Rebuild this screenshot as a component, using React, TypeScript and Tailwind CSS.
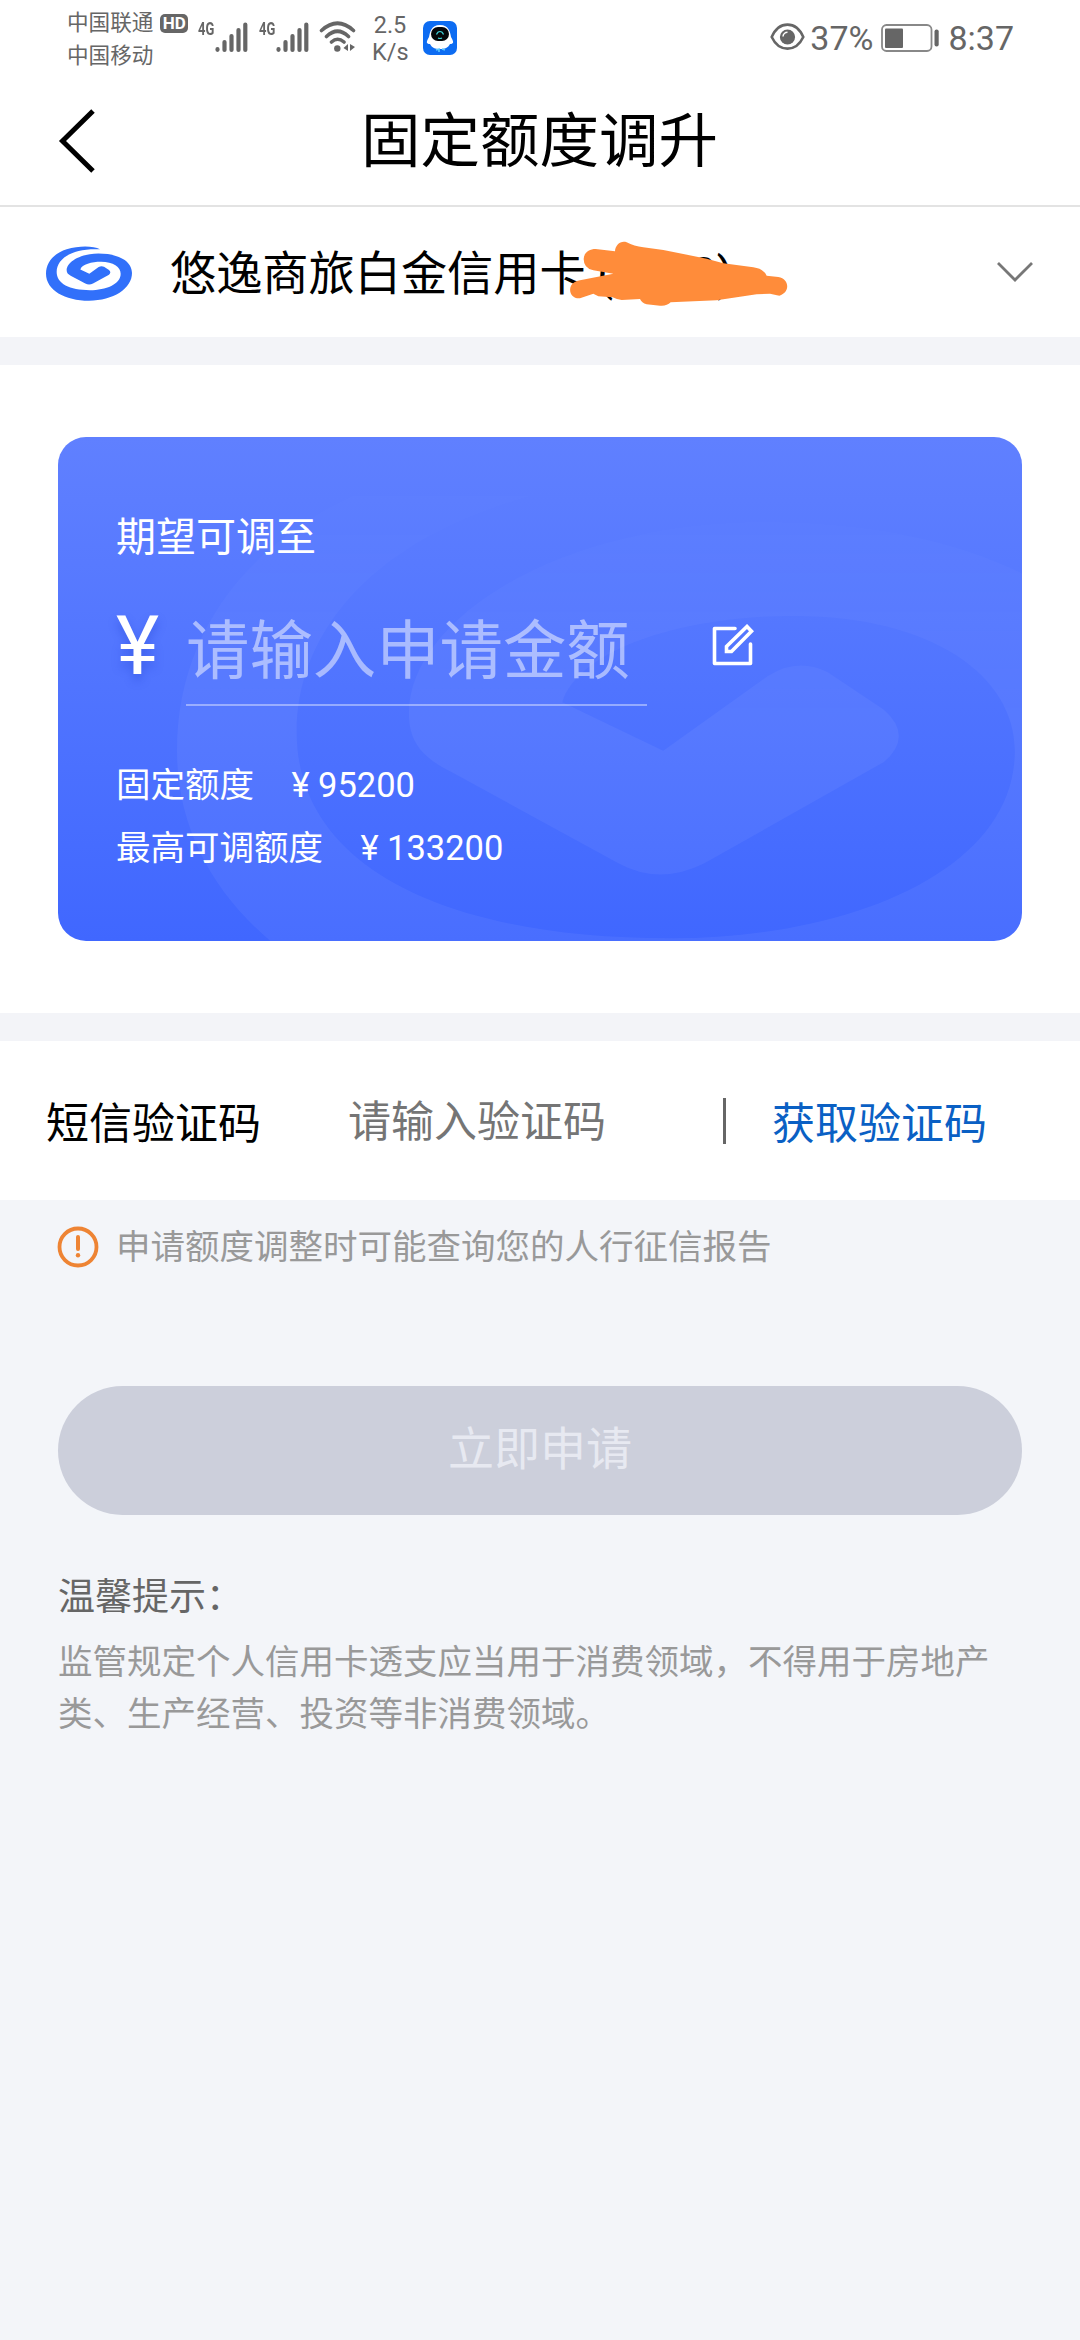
import type { ReactNode } from "react";

const TIPS = [
  "监管规定个人信用卡透支应当用于消费领域，不得用于房地产",
  "类、生产经营、投资等非消费领域。",
];

const LIMITS = [
  { label: "固定额度", value: "95200" },
  { label: "最高可调额度", value: "133200" },
];

const SwirlMark = ({ className }: { className?: string }) => (
  <svg viewBox="48 76 258 167" preserveAspectRatio="none" className={className} fill="currentColor">
    <path d="M210 86C190 75 148 74 110 86C70 99 48 126 48 160C48 210 105 242 177 242C250 242 306 205 306 158C306 120 262 99 205 99C150 99 110 125 110 150C110 158 114 162 122 166L166 190Q177 196 189 190L237 163Q245 156 237 149L222 139Q214 135 206 140L178 160L151 147C156 132 185 124 213 124C250 124 272 140 272 160C272 192 228 210 180 210C118 210 80 190 80 155C80 115 125 82 210 86Z" />
  </svg>
);

const Signal = () => (
  <div className="flex">
    <span className="origin-left scale-x-[0.72] w-[16px] mt-[20px] text-[18px] leading-[18px] font-bold">
      4G
    </span>
    <svg width="34" height="32" viewBox="0 0 34 32" className="mt-[21px]" stroke="currentColor" strokeWidth="4.2" strokeLinecap="round">
      <path d="M3.5 28.2v.6M10.5 21v8M17.5 15v14M24.5 9v20M31.3 3.5v25.5" />
    </svg>
  </div>
);

const StatusBar = () => (
  <div className="flex h-20 justify-between pl-[67px] pr-[66px] text-[#666]">
    <div className="flex">
      <div className="w-[131px] pt-[7px] text-[21.6px] leading-[32.5px]">
        <div className="flex items-center">
          中国联通
          <span className="ml-[7px] flex h-[19px] w-[28px] items-center justify-center rounded-[5px] bg-[#666] text-[17px] font-bold leading-none text-white">
            HD
          </span>
        </div>
        <div>中国移动</div>
      </div>
      <div className="flex gap-[11px]">
        <Signal />
        <Signal />
      </div>
      <svg width="38" height="32" viewBox="0 0 38 32" className="ml-[10px] mt-[21px]" fill="none" stroke="currentColor" strokeWidth="3.6" strokeLinecap="round">
        <path d="M2.5 9.5Q18.5 -5 34.5 9.5M7.5 15.5Q18.5 5 29.5 15.5M12.5 21Q18.5 15.5 25 21" />
        <circle cx="18.3" cy="27.5" r="3.2" fill="currentColor" stroke="none" />
        <path d="M29 23v7l-4.5-3zM31 23v7l5-4z" fill="currentColor" stroke="none" />
      </svg>
      <div className="ml-[15px] w-[36px] pt-[12px] text-center text-[23.5px] leading-[27px]">
        2.5
        <br />
        K/s
      </div>
      <svg width="34" height="34" viewBox="0 0 34 34" className="ml-[15px] mt-[21px]">
        <rect width="34" height="34" rx="7" fill="#0d6cf2" />
        <path d="M17 4C8 4 7 11 6 16c-3 5-3 7 1 7 2 4 5 5 10 5s8-1 10-5c4 0 4-2 1-7C27 11 26 4 17 4z" fill="#fff" />
        <rect x="8" y="6" width="18" height="14" rx="7" fill="#05070a" />
        <path d="M13.5 13.5q1-3 3.5-3t3.5 3M15 17q2 1 4 0" fill="none" stroke="#3fd0d8" strokeWidth="1.2" />
        <path d="M13 29l3-1v3M19 28l3 1" stroke="#5cc8ff" strokeWidth="1.6" fill="none" />
      </svg>
    </div>
    <div className="flex items-center pb-[4px] text-[34px] leading-none">
      <svg width="35" height="28" viewBox="0 0 35 28" className="mr-[5px] mb-[3px]" fill="none">
        <path d="M1.7 14C9 -2.5 26 -2.5 33.3 14C26 29.5 9 29.5 1.7 14Z" stroke="currentColor" strokeWidth="2.6" />
        <circle cx="17.5" cy="14" r="7.6" fill="currentColor" />
        <path d="M13 13.5a4.5 4.5 0 0 1 4.5-4.2" stroke="#fff" strokeWidth="1.5" />
      </svg>
      37%
      <svg width="59" height="28" viewBox="0 0 59 28" className="ml-[8px] mr-[8px] mb-[1px]" fill="none">
        <rect x="1" y="1" width="49.5" height="26" rx="4.5" stroke="#888" strokeWidth="1.8" />
        <rect x="4" y="4.5" width="18" height="19.5" rx="1" fill="currentColor" />
        <rect x="53.5" y="5.5" width="4.2" height="17" rx="2" fill="currentColor" />
      </svg>
      8:37
    </div>
  </div>
);

const Header = () => (
  <header className="flex h-[127px] items-center border-b-2 border-[#e3e3e3] pl-[58px]">
    <svg width="38" height="64" viewBox="0 0 38 64" className="mb-[4px]" fill="none" stroke="#000" strokeWidth="5">
      <path d="M35 2L4.5 32L35 62" />
    </svg>
    <h1 className="ml-[265px] text-[59.5px] leading-none text-black">固定额度调升</h1>
  </header>
);

const CardPicker = () => (
  <div className="relative flex h-[130px] items-center bg-white pl-[46px] pr-[46px]">
    <SwirlMark className="mb-[-2px] h-[55px] w-[86px] text-[#3170fa]" />
    <span className="ml-[38px] pt-[5px] text-[46.2px] leading-none text-black">悠逸商旅白金信用卡 (0000)</span>
    <svg width="38" height="24" viewBox="0 0 38 24" className="ml-auto" fill="none" stroke="#777" strokeWidth="2.8">
      <path d="M2 3L19 20L36 3" />
    </svg>
    {/* marker strokes hiding the card number */}
    <svg width="218" height="66" viewBox="420 64 654 198" className="absolute left-[570px] top-[34px]" fill="#ff8c3a">
      <path d="M461 118C462 98 478 88 497 88L555 95C556 76 572 62 590 68Q612 80 640 83L700 91L760 103L830 117L880 131L970 143Q1000 147 1010 168L1045 172C1080 178 1080 220 1048 228L1020 222L980 224L860 242L722 248Q710 260 690 258L650 254Q635 250 630 238L575 241Q560 240 548 233L505 230L490 222L450 236C425 238 415 215 423 198Q430 186 450 182L500 172L550 162L490 152Q461 146 461 118Z" />
    </svg>
  </div>
);

const Band = () => <div className="h-7 bg-[#f3f4f8]" />;

const AmountCard = () => (
  <section className="bg-white px-[58px] pb-[72px] pt-[72px]">
    <div className="relative h-[504px] overflow-hidden rounded-[28px] bg-linear-to-b from-[#6080ff] to-[#4067ff] px-[58px] pt-[71px] text-white">
      <SwirlMark className="absolute left-[119px] top-[-1px] h-[626px] w-[965px] text-white/5 [mask-image:linear-gradient(to_bottom,transparent_5%,black_45%)]" />
      <div className="relative">
        <div className="text-[40px] leading-[60px]">期望可调至</div>
        <div className="mt-[10px] flex h-[128px]">
          <span className="w-[70px] pt-[28px] text-[82px] leading-[80px] [text-shadow:0_6px_10px_rgba(30,60,200,0.35)]">¥</span>
          <div className="w-[461px] border-b-2 border-white/40 pt-[33px] text-[63.4px] leading-[80px] text-white/50">
            <span className="whitespace-nowrap">请输入申请金额</span>
          </div>
          <svg width="42" height="42" viewBox="0 0 42 42" className="ml-[65px] mt-[46px]" fill="none" stroke="#fff" strokeWidth="3.6">
            <path d="M23 4.5H2.5V39.5H38.5V20" strokeLinecap="round" strokeLinejoin="round" />
            <path d="M35 2.5L39.5 7.2L19.5 27.5H14.5V22.5Z" />
          </svg>
        </div>
        <div className="mt-[48px] text-[34.5px] leading-[63px]">
          {LIMITS.map((item) => (
            <div key={item.label} className="flex">
              <span>{item.label}</span>
              <span className="ml-[29px] w-[35px] text-center">¥</span>
              <span>{item.value}</span>
            </div>
          ))}
        </div>
      </div>
    </div>
  </section>
);

const SmsRow = () => (
  <div className="flex h-[159px] items-center bg-white pl-[46px] text-[43px] leading-none">
    <span className="w-[302px] pt-[7px] text-black">短信验证码</span>
    <span className="w-[375px] pt-[4px] text-[#757575]">请输入验证码</span>
    <span className="h-[46px] w-[3px] bg-[#666]" />
    <span className="ml-[46px] pt-[7px] text-[#0a60c4]">获取验证码</span>
  </div>
);

const Notice = ({ children }: { children: ReactNode }) => (
  <div className="flex h-[93px] items-center px-[57px] text-[34.5px] leading-none text-[#999]">
    <svg width="42" height="42" viewBox="0 0 42 42" className="mr-[17px]" fill="none" stroke="#ee8434" strokeLinecap="round">
      <circle cx="21" cy="21" r="18.5" strokeWidth="3.8" />
      <path d="M21 11v12" strokeWidth="4" />
      <path d="M21 29.2v.1" strokeWidth="4.4" />
    </svg>
    <span className="pt-[2px]">{children}</span>
  </div>
);

const App = () => {
  return (
    <div className="h-[2340px] w-[1080px] overflow-hidden whitespace-nowrap bg-[#f3f5f9] font-[Roboto,'Noto_Sans_CJK_SC',sans-serif]">
      <div className="bg-white">
        <StatusBar />
        <Header />
      </div>
      <CardPicker />
      <Band />
      <AmountCard />
      <Band />
      <SmsRow />
      <Notice>申请额度调整时可能查询您的人行征信报告</Notice>
      <main className="px-[58px] pt-[93px]">
        <button className="flex h-[129px] w-full items-center justify-center rounded-full bg-[#cccfdb] pb-[3px] text-[46px] leading-none text-[#e7e9f1]">
          立即申请
        </button>
        <h2 className="mt-[53px] text-[37px] leading-[60px] text-[#666]">温馨提示：</h2>
        <div className="mt-[9px] text-[34.5px] leading-[51.5px] text-[#999]">
          {TIPS.map((line) => (
            <p key={line}>{line}</p>
          ))}
        </div>
      </main>
    </div>
  );
};

export default App;
